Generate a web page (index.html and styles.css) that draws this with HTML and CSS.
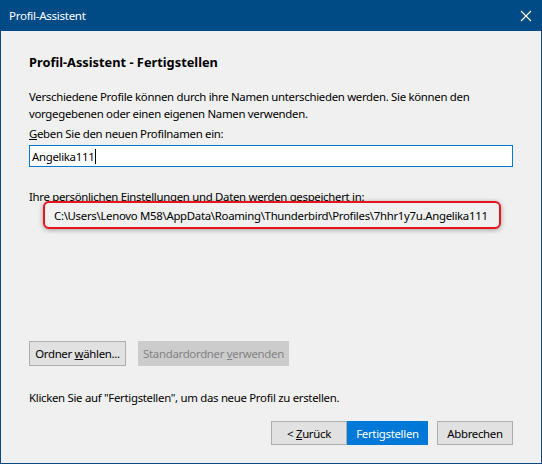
FILE: index.html
```html
<!DOCTYPE html>
<html lang="de">
<head>
<meta charset="utf-8">
<title>Profil-Assistent</title>
<link rel="stylesheet" href="styles.css">
</head>
<body>
<div class="window">
  <div class="titlebar">
    <span class="title">Profil-Assistent</span>
    <svg class="close" width="12" height="12" viewBox="0 0 12 12"><path d="M1 1 L11 11 M11 1 L1 11" stroke="#fff" stroke-width="1.2" fill="none"/></svg>
  </div>
  <div class="content">
    <h1 class="heading">Profil-Assistent - Fertigstellen</h1>
    <p class="text intro">Verschiedene Profile können durch ihre Namen unterschieden werden. Sie können den vorgegebenen oder einen eigenen Namen verwenden.</p>
    <p class="text label"><u>G</u>eben Sie den neuen Profilnamen ein:</p>
    <div class="input"><span>Angelika111</span><span class="caret"></span></div>
    <p class="text label2">Ihre persönlichen Einstellungen und Daten werden gespeichert in:</p>
    <div class="pathbox">C:\Users\Lenovo M58\AppData\Roaming\Thunderbird\Profiles\7hhr1y7u.Angelika111</div>
    <div class="spacer"></div>
    <div class="row">
      <button class="btn w1">Ordner <u>w</u>ählen...</button>
      <button class="btn disabled w2">Standardordner <u>v</u>erwenden</button>
    </div>
    <p class="text finish">Klicken Sie auf "Fertigstellen", um das neue Profil zu erstellen.</p>
    <div class="footer">
      <button class="btn w3">&lt; <u>Z</u>urück</button>
      <button class="btn primary w4">Fertigstellen</button>
      <button class="btn w5">Abbrechen</button>
    </div>
  </div>
</div>
</body>
</html>
```
FILE: styles.css
```css
html, body {
  margin: 0;
  padding: 0;
  background: #f0f0f0;
}
body {
  font-family: "Noto Sans", "Liberation Sans", sans-serif;
  font-size: 11.4px;
  letter-spacing: -0.3px;
  color: #000;
}
.window {
  width: 542px;
  height: 464px;
  box-sizing: border-box;
  border: 1px solid #0b4a84;
  border-top: 0;
  background: #f0f0f0;
  display: flex;
  flex-direction: column;
}
.titlebar {
  height: 31px;
  margin: 0 -1px;
  background: #004a85;
  color: #fff;
  display: flex;
  align-items: center;
  justify-content: space-between;
  padding: 0 10px 0 9px;
  flex-shrink: 0;
}
.title {
  font-size: 11.6px;
}
.close {
  display: block;
}
.content {
  flex: 1;
  display: flex;
  flex-direction: column;
  padding: 0 28px 0 28px;
}
.heading {
  margin: 23px 0 0 0;
  font-size: 12.8px;
  letter-spacing: 0;
  font-weight: bold;
  line-height: 16px;
}
.text {
  margin: 0;
  line-height: 17px;
}
.intro {
  margin-top: 18px;
}
.label {
  margin-top: 3px;
}
.input {
  margin-top: 3px;
  height: 22px;
  box-sizing: border-box;
  border: 1px solid #0078d7;
  background: #fff;
  display: flex;
  align-items: center;
  padding-left: 2px;
  width: 484px;
}
.caret {
  display: inline-block;
  width: 1px;
  height: 15px;
  background: #000;
  margin-left: 1px;
}
.label2 {
  margin-top: 21px;
}
.pathbox {
  margin-top: -4px;
  margin-left: 14px;
  width: 458px;
  height: 28px;
  box-sizing: border-box;
  border: 2px solid #e8141c;
  border-radius: 6px;
  box-shadow: 0 1px 5px rgba(0, 0, 0, 0.35);
  background: #f0f0f0;
  display: flex;
  align-items: center;
  padding-left: 9px;
  white-space: nowrap;
}
.spacer {
  height: 112px;
}
.row {
  display: flex;
  gap: 12px;
}
.btn {
  font-family: inherit;
  font-size: inherit;
  letter-spacing: inherit;
  color: #000;
  background: #e1e1e1;
  border: 1px solid #adadad;
  padding: 0;
  margin: 0;
  height: 25px;
  box-sizing: border-box;
}
.w1 { width: 97px; }
.w2 { width: 151px; }
.disabled {
  background: #cccccc;
  border-color: #cccccc;
  color: #838383;
}
.finish {
  margin-top: 23px;
}
.footer {
  margin-top: 15px;
  display: flex;
  justify-content: flex-end;
}
.footer .btn {
  height: 24px;
}
.w3 { width: 76px; }
.w4 { width: 81px; }
.w5 { width: 76px; margin-left: 9px; }
.primary {
  background: #0078d7;
  border-color: #0078d7;
  color: #fff;
}
```
